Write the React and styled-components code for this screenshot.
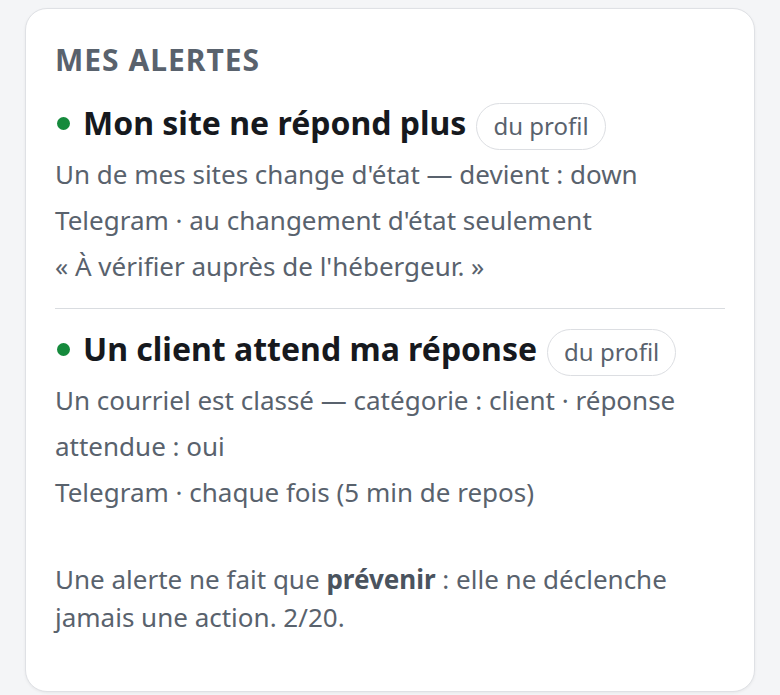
import React from "react";
import styled, { createGlobalStyle } from "styled-components";

const Global = createGlobalStyle`
  html, body {
    margin: 0;
    padding: 0;
    background: #f4f5f7;
    font-family: "Noto Sans", "Open Sans", sans-serif;
  }
`;

/* ---- carte ---- */
const Page = styled.div`
  padding: 8px 25px 4px 25px;
`;

const Carte = styled.section`
  background: #ffffff;
  border: 1px solid #dfe1e5;
  border-radius: 22px;
  box-shadow: 0 1px 3px rgba(0, 0, 0, 0.06);
  padding: 29px 29px 55px 29px;
`;

const Titre = styled.h2`
  margin: 0 0 15px 0;
  font-size: 30px;
  line-height: 44px;
  font-weight: 700;
  letter-spacing: 1px;
  color: #59626d;
  text-transform: uppercase;
`;

/* ---- alerte ---- */
const Alerte = styled.div`
  padding-bottom: ${(p) => (p.last ? "0" : "19px")};
  border-bottom: ${(p) => (p.last ? "none" : "1px solid #d9dce0")};
  margin-bottom: ${(p) => (p.last ? "45px" : "14px")};
`;

const Entete = styled.div`
  display: flex;
  align-items: center;
  height: 50px;
  margin-bottom: 4px;
`;

const Point = styled.span`
  width: 13px;
  height: 13px;
  border-radius: 50%;
  background: #158a3c;
  margin: 3px 13px 0 2px;
  flex-shrink: 0;
`;

const Nom = styled.span`
  font-size: 32px;
  font-weight: 700;
  color: #16191e;
`;

const Badge = styled.span`
  margin: 9px 0 0 10px;
  border: 1.5px solid #dcdee2;
  border-radius: 999px;
  padding: 7px 16px 8px 16px;
  font-size: 24px;
  color: #59626d;
  line-height: 30px;
`;

const Ligne = styled.div`
  font-size: 26px;
  line-height: 46px;
  color: #59626d;
`;

const Note = styled.p`
  margin: 0;
  font-size: 26px;
  line-height: 38px;
  color: #59626d;

  strong {
    font-weight: 700;
    color: #4a535e;
  }
`;

const alertes = [
  {
    nom: "Mon site ne répond plus",
    lignes: [
      "Un de mes sites change d'état — devient : down",
      "Telegram · au changement d'état seulement",
      "« À vérifier auprès de l'hébergeur. »",
    ],
  },
  {
    nom: "Un client attend ma réponse",
    lignes: [
      "Un courriel est classé — catégorie : client · réponse attendue : oui",
      "Telegram · chaque fois (5 min de repos)",
    ],
  },
];

export default function App() {
  return (
    <Page>
      <Global />
      <Carte>
        <Titre>Mes alertes</Titre>
        {alertes.map((a, i) => (
          <Alerte key={a.nom} last={i === alertes.length - 1}>
            <Entete>
              <Point />
              <Nom>{a.nom}</Nom>
              <Badge>du profil</Badge>
            </Entete>
            {a.lignes.map((l) => (
              <Ligne key={l}>{l}</Ligne>
            ))}
          </Alerte>
        ))}
        <Note>
          Une alerte ne fait que <strong>prévenir</strong> : elle ne déclenche
          jamais une action. 2/20.
        </Note>
      </Carte>
    </Page>
  );
}
